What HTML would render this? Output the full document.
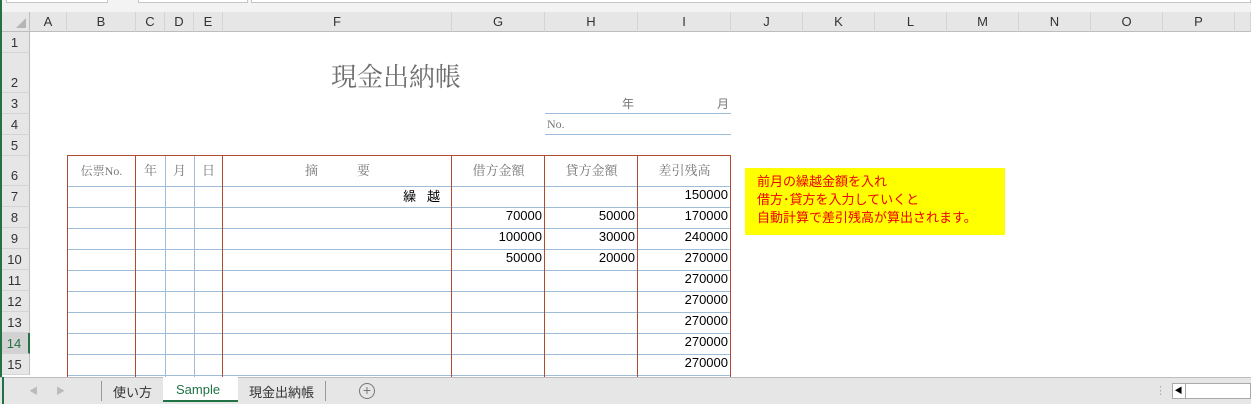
<!DOCTYPE html><html><head><meta charset="utf-8"><style>
*{margin:0;padding:0;box-sizing:border-box}
body{width:1251px;height:404px;overflow:hidden;background:#fff;position:relative;font-family:"Liberation Sans","Noto Sans CJK JP",sans-serif}
.a{position:absolute}
.ch{position:absolute;top:12px;height:20px;font-size:13px;color:#333;text-align:center;line-height:20px;border-right:1px solid #d4d4d4;background:#e6e6e6;border-bottom:1px solid #bdbdbd}
.rh{position:absolute;left:0;width:30px;font-size:13px;color:#333;text-align:center;background:#e6e6e6;border-bottom:1px solid #d4d4d4;border-right:1px solid #bdbdbd;padding-top:3px}
.hl{position:absolute;height:1px;background:#9fbcd8}
.vl{position:absolute;width:1px;background:#9fbcd8}
.br{position:absolute;background:#b04a30}
.n{position:absolute;font-size:13px;color:#000;text-align:right}
.hd{position:absolute;top:156px;height:30px;line-height:30px;font-size:13px;color:#777;text-align:center;font-family:"Liberation Serif","Noto Serif CJK SC",serif}
</style></head><body>
<div class="a" style="left:0;top:0;width:1251px;height:12px;background:#f3f3f3"></div>
<div class="a" style="left:6px;top:0;width:102px;height:3px;border:1px solid #c6c6c6;border-top:none;background:#fff"></div>
<div class="a" style="left:138px;top:0;width:110px;height:3px;border:1px solid #c6c6c6;border-top:none;background:#fff"></div>
<div class="a" style="left:251px;top:0;width:1000px;height:3px;border:1px solid #c6c6c6;border-top:none;background:#fff"></div>
<div class="a" style="left:0;top:12px;width:30px;height:20px;background:#e6e6e6;border-right:1px solid #bdbdbd;border-bottom:1px solid #bdbdbd"></div>
<div class="a" style="left:16px;top:18px;width:0;height:0;border-left:10px solid transparent;border-bottom:10px solid #b5b5b5"></div>
<div class="ch" style="left:30px;width:37px">A</div>
<div class="ch" style="left:67px;width:69px">B</div>
<div class="ch" style="left:136px;width:29px">C</div>
<div class="ch" style="left:165px;width:29px">D</div>
<div class="ch" style="left:194px;width:29px">E</div>
<div class="ch" style="left:223px;width:229px">F</div>
<div class="ch" style="left:452px;width:93px">G</div>
<div class="ch" style="left:545px;width:93px">H</div>
<div class="ch" style="left:638px;width:93px">I</div>
<div class="ch" style="left:731px;width:72px">J</div>
<div class="ch" style="left:803px;width:72px">K</div>
<div class="ch" style="left:875px;width:72px">L</div>
<div class="ch" style="left:947px;width:72px">M</div>
<div class="ch" style="left:1019px;width:72px">N</div>
<div class="ch" style="left:1091px;width:72px">O</div>
<div class="ch" style="left:1163px;width:72px">P</div>
<div class="ch" style="left:1235px;width:16px"></div>
<div class="rh" style="top:32px;height:21px">1</div>
<div class="rh" style="top:53px;height:40px;padding-top:22px">2</div>
<div class="rh" style="top:93px;height:21px">3</div>
<div class="rh" style="top:114px;height:21px">4</div>
<div class="rh" style="top:135px;height:21px">5</div>
<div class="rh" style="top:156px;height:30px;padding-top:12px">6</div>
<div class="rh" style="top:186px;height:21px">7</div>
<div class="rh" style="top:207px;height:21px">8</div>
<div class="rh" style="top:228px;height:21px">9</div>
<div class="rh" style="top:249px;height:21px">10</div>
<div class="rh" style="top:270px;height:21px">11</div>
<div class="rh" style="top:291px;height:21px">12</div>
<div class="rh" style="top:312px;height:21px">13</div>
<div class="rh" style="top:333px;height:21px;background:#d2d2d2;color:#217346;border-right:2px solid #217346">14</div>
<div class="rh" style="top:354px;height:21px">15</div>
<div class="a" style="left:0;top:0;width:2px;height:404px;background:#217346"></div>

<div class="a" style="left:331px;top:57px;font-size:26px;color:#6e6e6e;font-family:'Liberation Serif','Noto Serif CJK SC',serif">現金出納帳</div>
<div class="a" style="left:622px;top:95px;font-size:12px;color:#777">年</div>
<div class="a" style="left:717px;top:95px;font-size:12px;color:#777">月</div>
<div class="hl" style="left:545px;top:113px;width:186px"></div>
<div class="a" style="left:547px;top:117px;font-size:12px;color:#777;font-family:'Liberation Serif',serif">No.</div>
<div class="hl" style="left:545px;top:134px;width:186px"></div>

<div class="hl" style="left:67px;top:186px;width:664px"></div>
<div class="hl" style="left:67px;top:207px;width:664px"></div>
<div class="hl" style="left:67px;top:228px;width:664px"></div>
<div class="hl" style="left:67px;top:249px;width:664px"></div>
<div class="hl" style="left:67px;top:270px;width:664px"></div>
<div class="hl" style="left:67px;top:291px;width:664px"></div>
<div class="hl" style="left:67px;top:312px;width:664px"></div>
<div class="hl" style="left:67px;top:333px;width:664px"></div>
<div class="hl" style="left:67px;top:354px;width:664px"></div>
<div class="hl" style="left:67px;top:375px;width:664px"></div>
<div class="vl" style="left:165px;top:156px;height:221px"></div>
<div class="vl" style="left:194px;top:156px;height:221px"></div>
<div class="br" style="left:67px;top:155px;width:664px;height:1px"></div>
<div class="br" style="left:67px;top:155px;width:1px;height:222px"></div>
<div class="br" style="left:135px;top:155px;width:1px;height:222px"></div>
<div class="br" style="left:222px;top:155px;width:1px;height:222px"></div>
<div class="br" style="left:451px;top:155px;width:1px;height:222px"></div>
<div class="br" style="left:544px;top:155px;width:1px;height:222px"></div>
<div class="br" style="left:637px;top:155px;width:1px;height:222px"></div>
<div class="br" style="left:730px;top:155px;width:1px;height:222px"></div>

<div class="hd" style="left:67px;width:69px;font-size:12px">伝票No.</div>
<div class="hd" style="left:136px;width:29px">年</div>
<div class="hd" style="left:165px;width:29px">月</div>
<div class="hd" style="left:194px;width:29px">日</div>
<div class="hd" style="left:223px;width:229px">摘&nbsp;&nbsp;&nbsp;&nbsp;&nbsp;&nbsp;&nbsp;&nbsp;&nbsp;&nbsp;&nbsp;&nbsp;要</div>
<div class="hd" style="left:452px;width:93px">借方金額</div>
<div class="hd" style="left:545px;width:93px">貸方金額</div>
<div class="hd" style="left:638px;width:93px">差引残高</div>

<div class="n" style="left:380px;top:186px;width:60px">繰&nbsp;&nbsp;&nbsp;越</div>
<div class="n" style="left:640px;top:187px;width:88px">150000</div>
<div class="n" style="left:454px;top:208px;width:88px">70000</div>
<div class="n" style="left:547px;top:208px;width:88px">50000</div>
<div class="n" style="left:640px;top:208px;width:88px">170000</div>
<div class="n" style="left:454px;top:229px;width:88px">100000</div>
<div class="n" style="left:547px;top:229px;width:88px">30000</div>
<div class="n" style="left:640px;top:229px;width:88px">240000</div>
<div class="n" style="left:454px;top:250px;width:88px">50000</div>
<div class="n" style="left:547px;top:250px;width:88px">20000</div>
<div class="n" style="left:640px;top:250px;width:88px">270000</div>
<div class="n" style="left:640px;top:271px;width:88px">270000</div>
<div class="n" style="left:640px;top:292px;width:88px">270000</div>
<div class="n" style="left:640px;top:313px;width:88px">270000</div>
<div class="n" style="left:640px;top:334px;width:88px">270000</div>
<div class="n" style="left:640px;top:355px;width:88px">270000</div>

<div class="a" style="left:745px;top:168px;width:260px;height:67px;background:#ffff00;color:#e00;font-size:13px;line-height:18px;padding:5px 0 0 12px">前月の繰越金額を入れ<br>借方･貸方を入力していくと<br>自動計算で差引残高が算出されます。</div>

<div class="a" style="left:0;top:377px;width:1251px;height:27px;background:#e6e6e6;border-top:1px solid #bdbdbd"></div>
<div class="a" style="left:2px;top:377px;width:2px;height:27px;background:#217346"></div>
<div class="a" style="left:29px;top:384px;font-size:9px;color:#bbb">◀</div>
<div class="a" style="left:56px;top:384px;font-size:9px;color:#bbb">▶</div>
<div class="a" style="left:101px;top:381px;width:1px;height:20px;background:#999"></div>
<div class="a" style="left:113px;top:382px;font-size:13px;color:#333">使い方</div>
<div class="a" style="left:163px;top:377px;width:75px;height:25px;background:#fff;border-bottom:2px solid #217346"></div>
<div class="a" style="left:176px;top:382px;font-size:13px;color:#217346">Sample</div>
<div class="a" style="left:249px;top:382px;font-size:13px;color:#333">現金出納帳</div>
<div class="a" style="left:325px;top:381px;width:1px;height:20px;background:#999"></div>
<div class="a" style="left:359px;top:383px;width:16px;height:16px;border:1.5px solid #777;border-radius:50%;color:#777;font-size:14px;line-height:12px;text-align:center">+</div>
<div class="a" style="left:1155px;top:384px;font-size:11px;color:#aaa">⋮</div>
<div class="a" style="left:1172px;top:383px;width:79px;height:16px;background:#fff;border:1px solid #aaa"></div>
<div class="a" style="left:1172px;top:383px;width:14px;height:16px;border-right:1px solid #aaa;font-size:8px;line-height:15px;text-align:center;color:#000">◀</div>
</body></html>
